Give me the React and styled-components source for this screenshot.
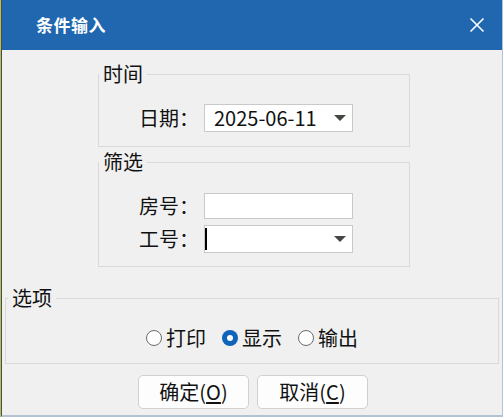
import React from "react";
import styled, { createGlobalStyle } from "styled-components";

const Global = createGlobalStyle`
  html, body { margin: 0; padding: 0; background: #f0f0f0; }
  body { font-family: "Noto Sans CJK SC", "Noto Sans", sans-serif; }
  * { box-sizing: border-box; }
`;

const Outer = styled.div`
  width: 503px;
  height: 417px;
  border-left: 1px solid #e2b514;
  display: flex;
`;

const Win = styled.div`
  flex: 1;
  display: flex;
  flex-direction: column;
  border-left: 1px solid #1d5896;
  border-right: 2px solid #b2c3d4;
  border-bottom: 2px solid #b2c3d4;
  background: #f0f0f0;
`;

const TitleBar = styled.div`
  height: 50px;
  flex: none;
  background: #2067b0;
  display: flex;
  align-items: center;
  padding-left: 34px;
  padding-right: 17px;
  color: #fff;
`;

const Title = styled.div`
  flex: 1;
  font-size: 17px;
  font-weight: 700;
  letter-spacing: 0.5px;
  line-height: 24px;
`;

const Body = styled.div`
  flex: 1;
  display: flex;
  flex-direction: column;
  padding: 0 3px;
  font-size: 20px;
  color: #111;
`;

const Group = styled.fieldset`
  margin: ${(p) => p.$mt}px 0 0 ${(p) => p.$ml}px;
  width: ${(p) => p.$w}px;
  padding: 0;
  border: 1px solid #d9d9d9;
  min-width: 0;
`;

const Legend = styled.legend`
  padding: 0 4px;
  margin-left: ${(p) => p.$ml || 0}px;
  font-size: 20px;
  line-height: 24px;
  color: #111;
`;

const FormGrid = styled.div`
  display: grid;
  grid-template-columns: 54px 149px;
  column-gap: 11px;
  row-gap: 6px;
  align-items: center;
  padding: ${(p) => p.$pt}px 0 ${(p) => p.$pb}px 40px;
`;

const Label = styled.div`
  font-size: 20px;
  line-height: 24px;
  white-space: nowrap;
`;

const Field = styled.div`
  height: ${(p) => p.$h}px;
  background: #fff;
  border: 1px solid #c9c9c9;
  display: flex;
  align-items: center;
  padding: 0 6px 0 9px;
  font-size: 20px;
  line-height: 24px;
  color: #111;
`;

const FieldText = styled.span`
  flex: 1;
  white-space: nowrap;
`;

const Caret = styled.span`
  width: 2px;
  height: 22px;
  background: #000;
  margin-left: -9px;
`;

const Arrow = styled.svg`
  width: 12px;
  height: 6px;
  flex: none;
`;

const Spacer = styled.span`
  flex: 1;
`;

const RadioRow = styled.div`
  display: flex;
  justify-content: center;
  gap: 16px;
  padding: 15px 0 12px;
`;

const RadioItem = styled.label`
  display: flex;
  align-items: center;
  gap: 4px;
  font-size: 20px;
  line-height: 26px;
`;

const Dot = styled.span`
  width: 16px;
  height: 16px;
  border-radius: 50%;
  flex: none;
  background: ${(p) => (p.$on ? "#0f63b8" : "#fff")};
  border: ${(p) => (p.$on ? "none" : "1.5px solid #6a6a6a")};
  display: flex;
  align-items: center;
  justify-content: center;
  &::after {
    content: "";
    display: ${(p) => (p.$on ? "block" : "none")};
    width: 6px;
    height: 6px;
    border-radius: 50%;
    background: #fff;
  }
`;

const Buttons = styled.div`
  display: flex;
  justify-content: center;
  gap: 8px;
  margin-top: 11px;
  padding-left: 2px;
`;

const Btn = styled.button`
  width: 111px;
  height: 34px;
  border: 1px solid #d0d0d0;
  border-radius: 5px;
  background: #fdfdfd;
  font-family: "Noto Sans CJK SC", "Noto Sans", sans-serif;
  font-size: 20px;
  line-height: 24px;
  color: #111;
  padding: 0;
  display: flex;
  align-items: center;
  justify-content: center;
  u { text-decoration: underline; text-underline-offset: 2px; }
`;

const Close = () => (
  <svg width="16" height="16" viewBox="0 0 16 16">
    <path d="M1.5 1.5 L14.5 14.5 M14.5 1.5 L1.5 14.5" stroke="#fff" strokeWidth="1.6" fill="none" />
  </svg>
);

const DownArrow = () => (
  <Arrow viewBox="0 0 12 6">
    <path d="M0 0 H12 L6 6 Z" fill="#434843" />
  </Arrow>
);

export default function App() {
  return (
    <>
      <Global />
      <Outer>
        <Win>
          <TitleBar>
            <Title>条件输入</Title>
            <Close />
          </TitleBar>
          <Body>
            <Group $mt={12} $ml={93} $w={312}>
              <Legend>时间</Legend>
              <FormGrid $pt={18} $pb={14}>
                <Label>日期：</Label>
                <Field $h={28}>
                  <FieldText>2025-06-11</FieldText>
                  <DownArrow />
                </Field>
              </FormGrid>
            </Group>
            <Group $mt={3} $ml={93} $w={312}>
              <Legend>筛选</Legend>
              <FormGrid $pt={19} $pb={13}>
                <Label>房号：</Label>
                <Field $h={26} />
                <Label>工号：</Label>
                <Field $h={28}>
                  <Caret />
                  <Spacer />
                  <DownArrow />
                </Field>
              </FormGrid>
            </Group>
            <Group $mt={19} $ml={0} $w={494}>
              <Legend $ml={2}>选项</Legend>
              <RadioRow>
                <RadioItem><Dot />打印</RadioItem>
                <RadioItem><Dot $on />显示</RadioItem>
                <RadioItem><Dot />输出</RadioItem>
              </RadioRow>
            </Group>
            <Buttons>
              <Btn>确定(<u>O</u>)</Btn>
              <Btn>取消(<u>C</u>)</Btn>
            </Buttons>
          </Body>
        </Win>
      </Outer>
    </>
  );
}
